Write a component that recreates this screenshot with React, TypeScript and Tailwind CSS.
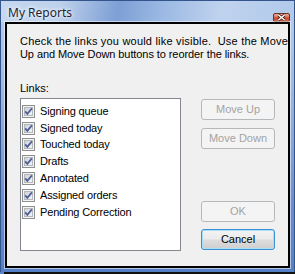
const links = [
  "Signing queue",
  "Signed today",
  "Touched today",
  "Drafts",
  "Annotated",
  "Assigned orders",
  "Pending Correction",
];

function CheckBox() {
  return (
    <svg width="13" height="13" viewBox="0 0 13 13" className="shrink-0">
      <defs>
        <linearGradient id="cbfill" x1="0" y1="0" x2="1" y2="1">
          <stop offset="0" stopColor="#cbcfd5" />
          <stop offset="1" stopColor="#f6f6f6" />
        </linearGradient>
      </defs>
      <rect x="0.5" y="0.5" width="12" height="12" fill="#f4f4f4" stroke="#8e8f8f" />
      <rect x="2.5" y="2.5" width="8" height="8" fill="url(#cbfill)" stroke="#b4b8be" />
      <path d="M3.2 6.4 L5.3 8.9 L9.9 3.4" fill="none" stroke="#4b5f96" strokeWidth="1.7" />
    </svg>
  );
}

function WinButton({ label, disabled, isDefault }: any) {
  if (disabled) {
    return (
      <div className="h-[21px] flex items-center justify-center rounded-[3px] border border-[#b5b9bc] bg-[#f4f4f4] text-[#a3a3a3]">
        {label}
      </div>
    );
  }
  return (
    <div
      className={
        "h-[21px] flex items-center justify-center rounded-[3px] border text-black bg-[linear-gradient(to_bottom,#f3f3f3_0%,#ebebeb_48%,#dddddd_52%,#cfcfcf_100%)] " +
        (isDefault
          ? "border-[#3a8fd0] shadow-[inset_0_0_0_1px_#a8e0f8]"
          : "border-[#707070] shadow-[inset_0_0_0_1px_#fcfcfc]")
      }
    >
      {label}
    </div>
  );
}

export default function App() {
  return (
    <div className="w-[295px] h-[274px] bg-white overflow-hidden font-['Liberation_Sans',Arial,sans-serif] text-[11px] leading-[13px]">
      <div className="h-[272px] flex flex-col border-t border-l border-r border-[#34558b] bg-[linear-gradient(to_bottom,#bcd0ec_0%,#9fbbe4_30%,#6790d0_75%,#5580c6_100%)]">
        {/* title bar */}
        <div className="h-[21px] flex justify-between pl-[7px] pr-[4px] bg-[linear-gradient(100deg,#c6d7ef_0%,#bdd1ec_20%,#7d9fd5_40%,#9bb9e3_55%,#c0d3ee_75%,#b1c9eb_100%)]">
          <span className="pt-[4px] font-['Noto_Sans',sans-serif] text-[12px] leading-[16px] text-[#1b2436] [text-shadow:0_0_6px_#ffffff,0_0_3px_#ffffff]">
            My Reports
          </span>
          <div className="mt-[12px] w-[17px] h-[9px] rounded-[2px] border border-[#6b3327] bg-[linear-gradient(to_bottom,#eaa896_0%,#d9735a_45%,#c8462b_55%,#d4674b_100%)] flex items-center justify-center">
            <svg width="9" height="7" viewBox="0 0 9 7">
              <path d="M1.5 1 L7.5 6 M7.5 1 L1.5 6" stroke="#4a1a12" strokeWidth="3" />
              <path d="M1.5 1 L7.5 6 M7.5 1 L1.5 6" stroke="#ffffff" strokeWidth="1.6" />
            </svg>
          </div>
        </div>

        {/* client area */}
        <div className="flex-1 px-[4px] pb-[4px]">
          <div className="h-full border-2 border-black bg-[#f0f0f0] shadow-[0_0_0_1px_rgba(255,255,255,0.55)] pt-[11px] px-[13px]">
            <p className="whitespace-pre text-black">
              <span className="tracking-[0.2px]">{"Check the links you would like visible.  Use the Move"}</span>
              <br />
              <span className="tracking-[-0.08px]">{"Up and Move Down buttons to reorder the links."}</span>
            </p>
            <p className="mt-[21px] text-black">Links:</p>
            <div className="mt-[3px] flex justify-between">
              <div className="w-[161px] h-[153px] border border-[#828790] bg-white pt-[4px] pl-[1px]">
                {links.map((l) => (
                  <div key={l} className="h-[16.8px] flex items-center gap-[5px] text-black">
                    <CheckBox />
                    <span className="tracking-[-0.15px]">{l}</span>
                  </div>
                ))}
              </div>
              <div className="w-[74px] h-[153px] flex flex-col pt-[1px] pb-[1px]">
                <WinButton label="Move Up" disabled />
                <div className="mt-[8px]">
                  <WinButton label="Move Down" disabled />
                </div>
                <div className="flex-1" />
                <WinButton label="OK" disabled />
                <div className="mt-[7px]">
                  <WinButton label="Cancel" isDefault />
                </div>
              </div>
            </div>
          </div>
        </div>
      </div>
      <div className="h-[2px] flex">
        <div className="w-[4px] bg-[#5a84c8]" />
        <div className="flex-1 bg-[#111111]" />
      </div>
    </div>
  );
}
